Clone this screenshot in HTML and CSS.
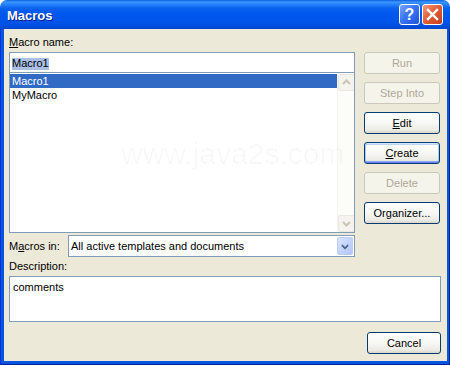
FILE: index.html
```html
<!DOCTYPE html>
<html>
<head>
<meta charset="utf-8">
<title>Macros</title>
<link rel="stylesheet" href="styles.css">
</head>
<body>
<div class="window">
  <div class="titlebar">
    <span class="title">Macros</span>
    <div class="tb-buttons">
      <span class="tb-btn help">?</span>
      <span class="tb-btn close"><svg width="21" height="21" viewBox="0 0 21 21"><path d="M6 6 L15 15 M15 6 L6 15" stroke="#fff" stroke-width="2.4" stroke-linecap="square"/></svg></span>
    </div>
  </div>
  <div class="frame">
    <div class="client">
      <div class="top">
        <div class="left">
          <div class="lbl"><u>M</u>acro name:</div>
          <div class="input"><span class="sel">Macro1</span></div>
          <div class="list">
            <div class="items">
              <div class="item selected">Macro1</div>
              <div class="item">MyMacro</div>
            </div>
            <div class="scrollbar">
              <span class="sb-btn"><svg width="15" height="15" viewBox="0 0 15 15"><path d="M4 9 L7.5 5.5 L11 9" fill="none" stroke="#c9c6b8" stroke-width="2"/></svg></span>
              <span class="sb-track"></span>
              <span class="sb-btn"><svg width="15" height="15" viewBox="0 0 15 15"><path d="M4 6 L7.5 9.5 L11 6" fill="none" stroke="#c9c6b8" stroke-width="2"/></svg></span>
            </div>
            <span class="watermark">www.java2s.com</span>
          </div>
          <div class="macros-in">
            <div class="lbl in-lbl">M<u>a</u>cros in:</div>
            <div class="combo">
              <span class="combo-text">All active templates and documents</span>
              <span class="combo-btn"><svg width="16" height="19" viewBox="0 0 16 19"><path d="M4.5 8 L8 11.5 L11.5 8" fill="none" stroke="#4d6185" stroke-width="2"/></svg></span>
            </div>
          </div>
        </div>
        <div class="right">
          <div class="btn disabled">Run</div>
          <div class="btn disabled">Step Into</div>
          <div class="btn"><u>E</u>dit</div>
          <div class="btn default"><u>C</u>reate</div>
          <div class="btn disabled">Delete</div>
          <div class="btn">Organizer...</div>
        </div>
      </div>
      <div class="lbl desc-lbl">Description:</div>
      <div class="textarea">comments</div>
      <div class="footer">
        <div class="btn cancel">Cancel</div>
      </div>
    </div>
  </div>
</div>
</body>
</html>
```
FILE: styles.css
```css
html, body {
  margin: 0;
  padding: 0;
  background: #ffffff;
}
body {
  font-family: "Liberation Sans", Arial, sans-serif;
  font-size: 11px;
  color: #000;
}
.window {
  width: 450px;
  height: 365px;
  display: flex;
  flex-direction: column;
  border-radius: 7px 7px 0 0;
  overflow: hidden;
}
.titlebar {
  height: 29px;
  flex: none;
  display: flex;
  justify-content: space-between;
  align-items: flex-start;
  background: linear-gradient(to bottom, #0a5fe0 0px, #3d95ff 2px, #2a86fb 4px, #0a63ef 8px, #0058ee 13px, #0055ea 21px, #0050e0 25px, #0046cf 29px);
}
.title {
  margin: 9px 0 0 7px;
  line-height: 13px;
  font-size: 13px;
  font-weight: bold;
  color: #ffffff;
  text-shadow: 1px 1px 0 #0a1e8a;
}
.tb-buttons {
  display: flex;
  gap: 2px;
  margin: 4px 7px 0 0;
}
.tb-btn {
  width: 21px;
  height: 21px;
  box-sizing: border-box;
  border: 1px solid #ffffff;
  border-radius: 3px;
  display: flex;
  align-items: center;
  justify-content: center;
}
.tb-btn svg {
  margin: -1px;
}
.help {
  background: linear-gradient(135deg, #7aa6ff 0%, #3a74f4 45%, #1f55dc 100%);
  color: #ffffff;
  font-weight: bold;
  font-size: 16px;
  line-height: 19px;
}
.close {
  background: linear-gradient(135deg, #f29a77 0%, #e2603a 45%, #c33c1a 100%);
}
.frame {
  flex: 1;
  display: flex;
  padding: 0 4px 4px 4px;
  background: #0855dd;
  box-shadow: inset 1px 0 #0831d9, inset -1px 0 #001ea0, inset 0 -1px #001ea0;
}
.client {
  flex: 1;
  background: #ece9d8;
  padding: 7px 6px 0 5px;
  display: flex;
  flex-direction: column;
}
.top {
  display: flex;
  gap: 9px;
}
.left {
  width: 346px;
  display: flex;
  flex-direction: column;
}
.lbl {
  line-height: 13px;
  height: 13px;
  white-space: nowrap;
}
.input {
  margin-top: 3px;
  height: 21px;
  box-sizing: border-box;
  border: 1px solid #7f9db9;
  background: #ffffff;
  padding: 4px 0 0 2px;
  position: relative;
  z-index: 1;
}
.sel {
  display: inline-block;
  background: #a9bfe6;
  line-height: 11px;
  height: 12px;
}
.list {
  margin-top: -1px;
  height: 161px;
  box-sizing: border-box;
  border: 1px solid #7f9db9;
  background: #ffffff;
  display: flex;
  position: relative;
  overflow: hidden;
}
.items {
  flex: 1;
  padding-top: 1px;
}
.item {
  height: 14px;
  line-height: 14px;
  padding-left: 2px;
}
.item.selected {
  background: #316ac5;
  color: #ffffff;
}
.scrollbar {
  width: 17px;
  display: flex;
  flex-direction: column;
  background: #fcfcf8;
  padding-top: 1px;
  box-shadow: inset 1px 0 #f4f3ee;
}
.sb-btn {
  width: 15px;
  height: 15px;
  margin-left: 1px;
  border: 1px solid #e9e7df;
  border-radius: 2px;
  background: #f4f3ee;
  display: block;
}
.sb-btn svg {
  display: block;
}
.sb-track {
  flex: 1;
}
.watermark {
  position: absolute;
  left: 111px;
  top: 64px;
  font-size: 30px;
  line-height: 34px;
  color: rgba(0, 0, 0, 0.03);
  white-space: nowrap;
  pointer-events: none;
}
.macros-in {
  margin-top: 2px;
  height: 22px;
  display: flex;
  align-items: center;
}
.in-lbl {
  width: 59px;
  flex: none;
}
.combo {
  flex: 1;
  height: 22px;
  box-sizing: border-box;
  border: 1px solid #7f9db9;
  background: #ffffff;
  display: flex;
  align-items: center;
  justify-content: space-between;
  padding: 1px;
}
.combo-text {
  padding-left: 1px;
}
.combo-btn {
  width: 16px;
  height: 18px;
  box-sizing: border-box;
  border: 1px solid #bccdf5;
  border-radius: 2px;
  background: linear-gradient(135deg, #dbe6fe 0%, #c3d4fb 50%, #b3c7f7 100%);
  display: flex;
  align-items: center;
  justify-content: center;
}
.right {
  width: 76px;
  padding-top: 16px;
  display: flex;
  flex-direction: column;
  gap: 8px;
}
.btn {
  height: 22px;
  box-sizing: border-box;
  border: 1px solid #003c74;
  border-radius: 3px;
  background: linear-gradient(to bottom, #ffffff 0%, #f6f6f2 55%, #ecebe5 85%, #d9d5c9 100%);
  display: flex;
  align-items: center;
  justify-content: center;
  line-height: 13px;
  white-space: nowrap;
}
.btn.disabled {
  border-color: #cac8bb;
  background: #f5f4ea;
  color: #aca899;
}
.btn.default {
  box-shadow: inset 0 1px 0 #cee7ff, inset 0 -1px 0 #6982ee, inset 1px 0 0 #a9c8f5, inset -1px 0 0 #a9c8f5, inset 0 2px 0 #bcd4f6, inset 0 -2px 0 #8daaf0;
}
.desc-lbl {
  margin-top: 3px;
}
.textarea {
  margin-top: 3px;
  height: 46px;
  width: 432px;
  box-sizing: border-box;
  border: 1px solid #7f9db9;
  background: #ffffff;
  padding: 3px 3px;
  line-height: 14px;
}
.footer {
  margin-top: 10px;
  display: flex;
  justify-content: flex-end;
}
.cancel {
  width: 74px;
}
```
